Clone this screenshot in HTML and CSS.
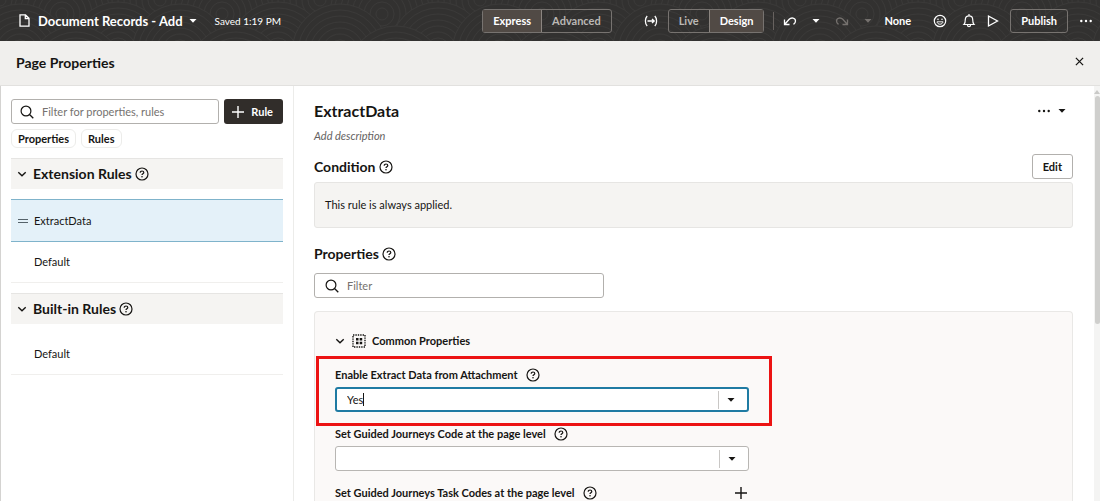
FILE: index.html
```html
<!DOCTYPE html>
<html lang="en">
<head>
  <meta charset="UTF-8">
  <meta name="viewport" content="width=device-width, initial-scale=1">
  <title>Document Records - Add</title>
  <link rel="stylesheet" href="styles.css">
</head>
<body>
  <svg class="sprite" aria-hidden="true">
    <symbol id="help" viewBox="0 0 14 14">
      <circle cx="7" cy="7" r="6" fill="none" stroke="currentColor" stroke-width="1.2"/>
      <path d="M5.2 5.7c0-1 .8-1.7 1.8-1.7s1.8.7 1.8 1.6c0 1.2-1.8 1.3-1.8 2.5" fill="none" stroke="currentColor" stroke-width="1.2"/>
      <circle cx="7" cy="9.8" r=".8" fill="currentColor"/>
    </symbol>
    <symbol id="search" viewBox="0 0 14 14">
      <circle cx="6" cy="6" r="4.9" fill="none" stroke="currentColor" stroke-width="1.2"/>
      <path d="M9.5 9.5l3.8 3.8" stroke="currentColor" stroke-width="1.3"/>
    </symbol>
    <symbol id="chevron" viewBox="0 0 10 10">
      <path d="M1.3 3.3L5 6.8l3.7-3.5" fill="none" stroke="currentColor" stroke-width="1.4"/>
    </symbol>
    <symbol id="caret" viewBox="0 0 8 8">
      <path d="M.5 2h7L4 5.800z" fill="currentColor"/>
    </symbol>
    <symbol id="plus" viewBox="0 0 12 12">
      <path d="M6 0v12M0 6h12" stroke="currentColor" stroke-width="1.4"/>
    </symbol>
    <symbol id="dots" viewBox="0 0 12 12">
      <circle cx="1.3" cy="6" r="1.2" fill="currentColor"/>
      <circle cx="6" cy="6" r="1.2" fill="currentColor"/>
      <circle cx="10.7" cy="6" r="1.2" fill="currentColor"/>
    </symbol>
    <symbol id="undo" viewBox="0 0 14 12">
      <path d="M1.500 4.500v5h5M1.800 9.200l4.400-4.900C8 2.300 12.500 2.500 12.500 6c0 1.600-.8 2.600-2 3.400" fill="none" stroke="currentColor" stroke-width="1.3"/>
    </symbol>
  </svg>

  <header class="topbar">
    <svg class="pattern" aria-hidden="true">
      <defs>
        <g id="rings" fill="none" stroke="#3a3938">
          <circle r="48" fill="#323130"/>
          <circle r="42"/><circle r="36"/><circle r="30"/><circle r="24"/>
          <circle r="18"/><circle r="12"/><circle r="6"/>
        </g>
        <pattern id="waves" width="160" height="84" patternUnits="userSpaceOnUse">
          <use href="#rings" x="0" y="0"/><use href="#rings" x="160" y="0"/>
          <use href="#rings" x="62" y="14"/><use href="#rings" x="118" y="50"/>
          <use href="#rings" x="20" y="52"/><use href="#rings" x="180" y="52"/>
          <use href="#rings" x="76" y="74"/>
        </pattern>
      </defs>
      <rect width="100%" height="100%" fill="url(#waves)"/>
    </svg>

    <div class="doc">
      <svg class="doc-icon" viewBox="0 0 11 13"><path d="M1 .8h5.500L10 4.300v7.900H1zM6.300.8v3.700H10" fill="none" stroke="currentColor" stroke-width="1.3"/></svg>
      <button class="doc-name">Document Records - Add <svg class="caret"><use href="#caret"/></svg></button>
      <span class="saved">Saved 1:19 PM</span>
    </div>

    <div class="actions">
      <div class="switch">
        <button class="on">Express</button><button>Advanced</button>
      </div>
      <button class="icon-btn fit" aria-label="Variables"><svg viewBox="0 0 14 12"><path d="M3.200 1C.8 3.500.8 8.500 3.200 11M10.800 1c2.400 2.500 2.400 7.500 0 10M3.500 6h6.500M8 4l2.200 2L8 8" fill="none" stroke="currentColor" stroke-width="1.3"/></svg></button>
      <div class="switch">
        <button>Live</button><button class="on">Design</button>
      </div>
      <span class="divider"></span>
      <button class="icon-btn" aria-label="Undo"><svg viewBox="0 0 14 12"><use href="#undo"/></svg></button>
      <button class="icon-btn small" aria-label="Undo list"><svg><use href="#caret"/></svg></button>
      <button class="icon-btn redo" aria-label="Redo" disabled><svg viewBox="0 0 14 12"><use href="#undo"/></svg></button>
      <button class="icon-btn small last" aria-label="Redo list" disabled><svg><use href="#caret"/></svg></button>
      <button class="none">None</button>
      <button class="icon-btn" aria-label="Feedback"><svg viewBox="0 0 14 14"><circle cx="7" cy="7" r="5.700" fill="none" stroke="currentColor" stroke-width="1.200"/><path d="M4 7.800h6c-.3 3.200-5.700 3.200-6 0z" fill="none" stroke="currentColor" stroke-width=".9"/><circle cx="5" cy="5.200" r=".8" fill="currentColor"/><circle cx="9" cy="5.200" r=".8" fill="currentColor"/></svg></button>
      <button class="icon-btn bell" aria-label="Notifications"><svg viewBox="0 0 14 14"><path d="M2 10.500h10c-1-1-1.300-2-1.300-5C10.700 3.200 9.200 1.800 7 1.800S3.300 3.200 3.300 5.500c0 3-.3 4-1.300 5zM7 0v2M5.500 11c0 2.300 3 2.300 3 0" fill="none" stroke="currentColor" stroke-width="1.200"/></svg></button>
      <button class="icon-btn play" aria-label="Preview"><svg viewBox="0 0 14 14"><path d="M2.500 2v10L11.500 7z" fill="none" stroke="currentColor" stroke-width="1.300"/></svg></button>
      <button class="publish">Publish</button>
      <button class="icon-btn more" aria-label="More"><svg viewBox="0 0 12 12"><use href="#dots"/></svg></button>
    </div>
  </header>

  <div class="titlebar">
    <h1>Page Properties</h1>
    <button class="close" aria-label="Close"><svg viewBox="0 0 10 10"><path d="M1 1l8 8M9 1L1 9" stroke="currentColor" stroke-width="1.400"/></svg></button>
  </div>

  <div class="layout">
    <aside class="sidebar">
      <div class="tools">
        <label class="search-box">
          <svg><use href="#search"/></svg>
          <input type="text" placeholder="Filter for properties, rules" aria-label="Filter for properties, rules">
        </label>
        <button class="add-rule"><svg><use href="#plus"/></svg>Rule</button>
      </div>
      <div class="chips">
        <button>Properties</button>
        <button>Rules</button>
      </div>

      <section>
        <h2 class="group"><svg class="chevron"><use href="#chevron"/></svg>Extension Rules <svg class="help"><use href="#help"/></svg></h2>
        <ul class="rules">
          <li class="selected"><svg class="grip" viewBox="0 0 10 6"><path d="M0 1.500h10M0 4.500h10" stroke="currentColor"/></svg><a href="#">ExtractData</a></li>
          <li><a href="#">Default</a></li>
        </ul>
      </section>
      <section>
        <h2 class="group"><svg class="chevron"><use href="#chevron"/></svg>Built-in Rules <svg class="help"><use href="#help"/></svg></h2>
        <ul class="rules">
          <li><a href="#">Default</a></li>
        </ul>
      </section>
    </aside>

    <main class="content">
      <div class="row">
        <h2 class="rule-name">ExtractData</h2>
        <button class="menu" aria-label="Rule actions"><svg><use href="#dots"/></svg><svg class="caret"><use href="#caret"/></svg></button>
      </div>
      <p class="description">Add description</p>

      <div class="row">
        <h3>Condition <svg class="help"><use href="#help"/></svg></h3>
        <button class="edit">Edit</button>
      </div>
      <div class="condition-box">This rule is always applied.</div>

      <h3>Properties <svg class="help"><use href="#help"/></svg></h3>
      <label class="search-box filter">
        <svg><use href="#search"/></svg>
        <input type="text" placeholder="Filter" aria-label="Filter">
      </label>

      <div class="panel">
        <h4><svg class="chevron"><use href="#chevron"/></svg><svg class="common" viewBox="0 0 14 14"><rect x="1" y="1" width="12" height="12" fill="none" stroke="currentColor" stroke-width="1.400" stroke-dasharray="1.400 1"/><path d="M4 4h2.500v2.500H4zM7.700 4h2.500v2.500H7.700zM4 7.700h2.500v2.500H4zM7.700 7.700h2.500v2.500H7.700z" fill="currentColor"/></svg>Common Properties</h4>

        <div class="highlight">
          <div class="field-label"><label for="extract">Enable Extract Data from Attachment</label><svg class="help"><use href="#help"/></svg></div>
          <div class="combo focused">
            <div class="value"><input id="extract" type="text" value="Yes"><span class="cursor"></span></div>
            <button aria-label="Show values"><svg><use href="#caret"/></svg></button>
          </div>
        </div>

        <div class="field">
          <div class="field-label"><label for="journey">Set Guided Journeys Code at the page level</label><svg class="help"><use href="#help"/></svg></div>
          <div class="combo">
            <div class="value"><input id="journey" type="text"></div>
            <button aria-label="Show values"><svg><use href="#caret"/></svg></button>
          </div>
        </div>

        <div class="field task">
          <div class="field-label"><span>Set Guided Journeys Task Codes at the page level</span><svg class="help"><use href="#help"/></svg></div>
          <button class="add" aria-label="Add task code"><svg><use href="#plus"/></svg></button>
        </div>
      </div>
    </main>

    <div class="scrollbar"><svg viewBox="0 0 6 4"><path d="M0 4l3-4 3 4z" fill="currentColor"/></svg><span></span></div>
  </div>
</body>
</html>
```
FILE: styles.css
```css
* {
  box-sizing: border-box;
  margin: 0;
  padding: 0;
}

body {
  display: flex;
  flex-direction: column;
  height: 100vh;
  overflow: hidden;
  font-family: Lato, "Open Sans", sans-serif;
  font-size: 11px;
  line-height: 16px;
  color: #161513;
  background: #fff;
}

button,
input {
  font: inherit;
  color: inherit;
  background: none;
  border: none;
}

button {
  cursor: pointer;
}

a {
  color: inherit;
  text-decoration: none;
}

svg {
  flex: none;
  display: block;
}

.sprite {
  position: absolute;
  width: 0;
  height: 0;
}

.caret {
  width: 8px;
  height: 8px;
}

.help {
  width: 14px;
  height: 14px;
}

.chevron {
  width: 10px;
  height: 10px;
}

/* top bar */
.topbar {
  position: relative;
  flex: none;
  display: flex;
  align-items: center;
  justify-content: space-between;
  height: 41px;
  padding: 0 8px 0 19px;
  color: #fff;
  background: #323130;
}

.pattern {
  position: absolute;
  inset: 0;
  width: 100%;
  height: 100%;
}

.doc,
.actions {
  position: relative;
  display: flex;
  align-items: center;
}

.doc-icon {
  width: 11px;
  height: 13px;
  margin-right: 8px;
}

.doc-name {
  display: flex;
  align-items: center;
  gap: 6px;
  font-size: 13px;
  font-weight: 700;
}

.saved {
  margin-left: 18px;
  font-size: 10px;
}

.switch {
  display: flex;
  border: 1px solid #777370;
  border-radius: 3px;
}

.switch button {
  height: 22px;
  padding: 0 10px;
  font-weight: 700;
  color: #bbb8b5;
}

.switch .on {
  color: #fff;
  background: #514a45;
}

.switch .on + button,
.switch button + .on {
  border-left: 1px solid #8b8580;
}

.icon-btn {
  display: flex;
  margin-right: 15px;
}

.icon-btn svg {
  width: 14px;
  height: 14px;
}

.icon-btn.fit {
  margin: 0 10px 0 32px;
}

.icon-btn.small svg {
  width: 8px;
  height: 8px;
}

.icon-btn:disabled {
  color: #75716e;
}

.redo svg {
  transform: scaleX(-1);
}

.icon-btn.last {
  margin-right: 12px;
}

.divider {
  width: 1px;
  height: 18px;
  margin: 0 9px;
  background: #67625f;
}

.none {
  margin-right: 22px;
  font-weight: 700;
}

.icon-btn.bell,
.icon-btn.play {
  margin-right: 10px;
}

.publish {
  height: 24px;
  margin-right: 12px;
  padding: 0 10px;
  font-weight: 700;
  border: 1px solid #777370;
  border-radius: 3px;
}

.icon-btn.more {
  margin-right: 0;
}

.icon-btn.more svg {
  width: 12px;
  height: 12px;
}

/* title bar */
.titlebar {
  flex: none;
  display: flex;
  align-items: center;
  justify-content: space-between;
  height: 45px;
  padding: 0 16px;
  background: #f0efed;
  border-bottom: 1px solid #e2e1df;
}

h1 {
  font-size: 14px;
  font-weight: 700;
}

.close {
  padding-bottom: 4px;
}

.close svg {
  width: 9px;
  height: 9px;
}

/* columns */
.layout {
  flex: 1;
  display: flex;
  min-height: 0;
  border-left: 1px solid #d4d3d1;
}

.sidebar {
  flex: none;
  width: 293px;
  padding: 13px 10px 0;
  border-right: 1px solid #ececea;
}

.tools {
  display: flex;
  gap: 5px;
}

.search-box {
  flex: 1;
  display: flex;
  align-items: center;
  gap: 8px;
  min-width: 0;
  height: 25px;
  padding: 0 8px;
  border: 1px solid #b2b0ad;
  border-radius: 3px;
}

.search-box svg {
  width: 14px;
  height: 14px;
}

.search-box input {
  flex: 1;
  min-width: 0;
  outline: none;
}

.search-box input::placeholder {
  color: #75726f;
}

.add-rule {
  display: flex;
  align-items: center;
  gap: 7px;
  height: 25px;
  padding: 0 10px 0 8px;
  font-weight: 700;
  color: #fff;
  background: #312d2a;
  border-radius: 3px;
}

.add-rule svg {
  width: 12px;
  height: 12px;
}

.chips {
  display: flex;
  gap: 5px;
  margin: 5px 0 10px;
}

.chips button {
  height: 19px;
  padding: 0 6px;
  line-height: 16px;
  font-weight: 700;
  border: 1px solid #ececea;
  border-radius: 6px;
}

.group {
  display: flex;
  align-items: center;
  height: 31px;
  padding-left: 6px;
  font-size: 14px;
  font-weight: 700;
  background: #f5f4f2;
  border-top: 1px solid #e6e5e3;
}

.group .chevron {
  margin-right: 6px;
}

.group .help {
  margin-left: 3px;
}

.rules {
  padding: 10px 0;
  list-style: none;
}

.rules li {
  display: flex;
  align-items: center;
  height: 41px;
  padding-left: 23px;
  border-bottom: 1px solid #f0efed;
}

.rules .selected {
  gap: 6px;
  height: 43px;
  padding-left: 7px;
  background: #e4f1f9;
  border-top: 1px solid #7fb3cb;
  border-bottom: 1px solid #7fb3cb;
}

.grip {
  width: 10px;
  height: 6px;
  color: #55636b;
}

.content {
  flex: 1;
  display: flex;
  flex-direction: column;
  min-width: 0;
  padding: 15px 21px 0 20px;
}

.row {
  display: flex;
  align-items: center;
  justify-content: space-between;
}

.rule-name {
  font-size: 16px;
  line-height: 20px;
  font-weight: 700;
}

.menu {
  display: flex;
  align-items: center;
  gap: 8px;
  margin-right: 7px;
}

.menu svg:first-child {
  width: 12px;
  height: 12px;
}

.description {
  margin: 7px 0 10px;
  font-style: italic;
  color: #65625f;
}

h3 {
  display: flex;
  align-items: center;
  gap: 3px;
  font-size: 14px;
  font-weight: 700;
}

.edit {
  height: 25px;
  padding: 0 10px;
  font-weight: 700;
  border: 1px solid #b2b0ad;
  border-radius: 3px;
}

.condition-box {
  margin: 3px 0 18px;
  padding: 14px 10px;
  background: #f5f4f2;
  border: 1px solid #e6e5e3;
  border-radius: 3px;
}

.filter {
  flex: none;
  width: 290px;
  margin-top: 11px;
  padding-left: 10px;
}

.panel {
  flex: 1;
  min-height: 0;
  margin-top: 13px;
  padding: 21px 20px 0;
  background: #fbf9f8;
  border: 1px solid #e9e8e6;
  border-bottom: none;
  border-radius: 4px 4px 0 0;
}

h4 {
  display: flex;
  align-items: center;
  font-size: 11px;
  font-weight: 700;
}

.common {
  width: 14px;
  height: 14px;
  margin: 0 6px 0 7px;
}

.highlight {
  width: 456px;
  height: 70px;
  margin: 7px 0 0 -19px;
  padding: 8px 16px;
  border: 3px solid #ec1313;
}

.field-label {
  display: flex;
  align-items: center;
  gap: 8px;
  font-weight: 700;
}

.combo {
  display: flex;
  align-items: center;
  width: 414px;
  height: 25px;
  margin-top: 4px;
  background: #fff;
  border: 1px solid #b8b6b3;
  border-radius: 3px;
}

.combo.focused {
  border: 2px solid #1f7ba3;
}

.value {
  flex: 1;
  display: flex;
  align-items: center;
  padding-left: 10px;
}

.value input {
  field-sizing: content;
  outline: none;
}

.cursor {
  width: 1px;
  height: 13px;
  background: #161513;
}

.combo button {
  padding: 5px 12px 5px 8px;
  border-left: 1px solid #c9c7c5;
}

.combo button svg {
  width: 8px;
  height: 8px;
}

.field {
  width: 414px;
}

.task {
  display: flex;
  align-items: center;
  justify-content: space-between;
  margin-top: 14px;
}

.add {
  margin-right: 2px;
}

.add svg {
  width: 12px;
  height: 12px;
}

.scrollbar {
  flex: none;
  width: 6px;
  padding-top: 4px;
  color: #c9c9c7;
  background: #f4f4f3;
}

.scrollbar svg {
  width: 6px;
  height: 4px;
  margin-bottom: 2px;
}

.scrollbar span {
  display: block;
  width: 5px;
  height: 228px;
  margin-left: 1px;
  background: #cfcfcd;
  border-radius: 3px;
}
```
